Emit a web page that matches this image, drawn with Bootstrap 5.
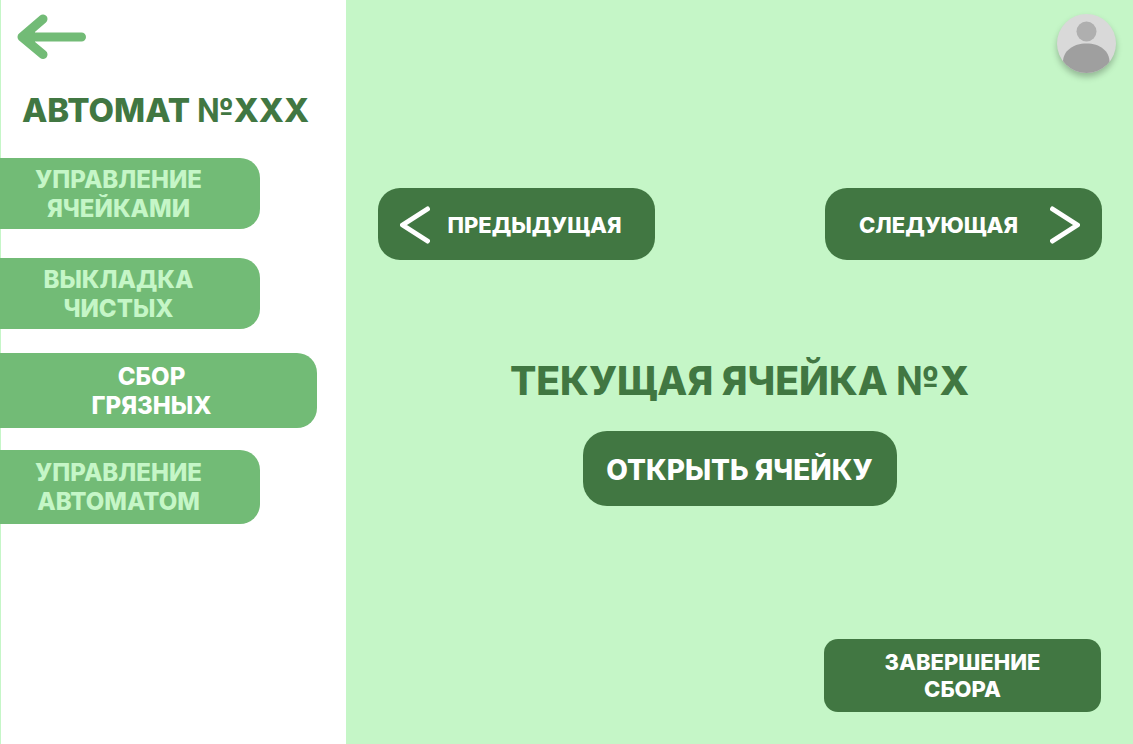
<!DOCTYPE html>
<html lang="ru">
<head>
<meta charset="utf-8">
<meta name="viewport" content="width=device-width, initial-scale=1">
<title>Автомат №XXX</title>
<link href="https://cdn.jsdelivr.net/npm/bootstrap@5.3.0/dist/css/bootstrap.min.css" rel="stylesheet">
<style>
  :root { --mint: #c5f6c7; --leaf: #72bb76; --forest: #417742; --heavy: 800; }
  body { background: var(--mint); font-family: Inter, "Open Sans", sans-serif; font-weight: var(--heavy); }
  .sidebar { flex: 0 0 346px; background: #fff; box-shadow: inset 1px 0 var(--mint); }
  .back-link { width: 72px; margin: 12px 0 0 16px; }
  .machine-title { font-size: 33px; line-height: 40px; font-weight: var(--heavy); color: var(--forest); margin: 28px 0; padding-right: 15px; }
  .tab-btn { --bs-btn-color: var(--mint); --bs-btn-bg: var(--leaf); --bs-btn-hover-color: #fff; --bs-btn-hover-bg: var(--leaf);
    --bs-btn-active-bg: var(--leaf); --bs-btn-active-color: #fff; --bs-btn-font-weight: var(--heavy); --bs-btn-font-size: 24px;
    --bs-btn-line-height: 29px; width: 260px; min-height: 71px; padding: 0 23px 0 0; border: 0; border-radius: 0 20px 20px 0; margin-bottom: 29px; }
  .tab-btn.active { width: 317px; min-height: 75px; padding-right: 14px; margin-bottom: 22px; }
  .tab-tall { min-height: 74px; }
  .act-btn { --bs-btn-color: #fff; --bs-btn-bg: var(--forest); --bs-btn-hover-color: #fff; --bs-btn-hover-bg: #386839;
    --bs-btn-active-bg: #386839; --bs-btn-active-color: #fff; --bs-btn-font-weight: var(--heavy); --bs-btn-font-size: 22px;
    --bs-btn-line-height: 27px; width: 277px; min-height: 72px; padding: 2px 22px 0; border: 0; border-radius: 22px; }
  .prev-btn { gap: 6px; }
  .next-btn { gap: 20px; }
  .avatar-btn { width: 59px; height: 59px; margin: 14px 17px 0 0; box-shadow: 0 4px 6px rgba(0, 0, 0, .25); background: #d9d9d9; }
  .step-row { margin-top: 115px; padding: 0 31px 0 32px; }
  .cell-title { font-size: 39px; line-height: 48px; font-weight: var(--heavy); color: var(--forest); margin: 97px 0 26px; }
  .open-btn { --bs-btn-font-size: 28px; --bs-btn-line-height: 34px; width: 314px; min-height: 75px; border-radius: 24px; }
  .finish-btn { min-height: 73px; border-radius: 14px; margin: 32px 32px 32px 0; padding-top: 0; }
</style>
</head>
<body>
<div class="d-flex min-vh-100">
  <aside class="sidebar d-flex flex-column">
    <a href="#" class="back-link" aria-label="Назад">
      <svg class="d-block" width="72" height="50" viewBox="0 0 72 50" fill="none" stroke="#72bb76" stroke-width="9" stroke-linecap="round" stroke-linejoin="round"><path d="M65.500 25H8M27 7 6 25l21 17.500"/><path d="M8 25l11-6v12z" fill="#72bb76" stroke="none"/></svg>
    </a>
    <h1 class="machine-title text-center text-nowrap">АВТОМАТ №XXX</h1>
    <nav class="d-flex flex-column align-items-start">
      <button type="button" class="btn tab-btn">УПРАВЛЕНИЕ<br>ЯЧЕЙКАМИ</button>
      <button type="button" class="btn tab-btn mb-4">ВЫКЛАДКА<br>ЧИСТЫХ</button>
      <button type="button" class="btn tab-btn active" aria-current="page">СБОР<br>ГРЯЗНЫХ</button>
      <button type="button" class="btn tab-btn tab-tall">УПРАВЛЕНИЕ<br>АВТОМАТОМ</button>
    </nav>
  </aside>
  <main class="d-flex flex-column flex-grow-1">
    <button type="button" class="avatar-btn btn border-0 rounded-circle p-0 overflow-hidden align-self-end" aria-label="Профиль">
      <svg class="d-block" width="59" height="59" viewBox="0 0 59 59"><circle cx="29.500" cy="17.500" r="10" fill="#afafaf"/><path d="M6 59V48C6 37 16 29.500 29.500 29.500S52.500 37 52.500 48v11z" fill="#9f9f9f"/></svg>
    </button>
    <div class="step-row d-flex justify-content-between gap-3">
      <button type="button" class="btn act-btn prev-btn d-flex align-items-center">
        <svg width="30" height="38" viewBox="0 0 30 38" fill="none" stroke="#fff" stroke-width="5" stroke-linecap="round" stroke-linejoin="round"><path d="M27.500 3 2.500 19l25 16"/></svg>
        <span class="flex-grow-1 text-center">ПРЕДЫДУЩАЯ</span>
      </button>
      <button type="button" class="btn act-btn next-btn d-flex align-items-center">
        <span class="flex-grow-1 text-center">СЛЕДУЮЩАЯ</span>
        <svg width="30" height="38" viewBox="0 0 30 38" fill="none" stroke="#fff" stroke-width="5" stroke-linecap="round" stroke-linejoin="round"><path d="m2.500 3 25 16-25 16"/></svg>
      </button>
    </div>
    <h2 class="cell-title text-center">ТЕКУЩАЯ ЯЧЕЙКА №X</h2>
    <button type="button" class="btn act-btn open-btn align-self-center text-nowrap">ОТКРЫТЬ ЯЧЕЙКУ</button>
    <button type="button" class="btn act-btn finish-btn align-self-end mt-auto">ЗАВЕРШЕНИЕ<br>СБОРА</button>
  </main>
</div>
<script src="https://cdn.jsdelivr.net/npm/bootstrap@5.3.0/dist/js/bootstrap.bundle.min.js"></script>
</body>
</html>
